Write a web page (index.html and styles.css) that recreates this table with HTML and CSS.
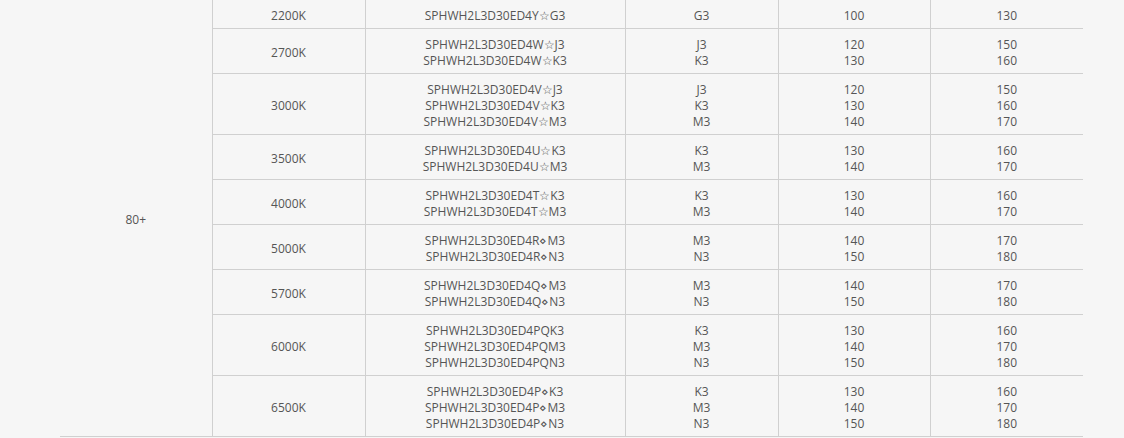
FILE: index.html
```html
<!DOCTYPE html>
<html lang="en">
<head>
    <meta charset="UTF-8">
    <title>LED Binning Table</title>
    <link rel="stylesheet" href="styles.css">
</head>
<body>
    <div class="spec-wrap">
        <table class="spec-table">
            <colgroup>
                <col class="c-cri">
                <col class="c-cct">
                <col class="c-part">
                <col class="c-bin">
                <col class="c-min">
                <col class="c-typ">
            </colgroup>
            <tbody>
                <tr>
                    <td rowspan="9" class="cri">80+</td>
                    <td>2200K</td>
                    <td>SPHWH2L3D30ED4Y☆G3</td>
                    <td>G3</td>
                    <td>100</td>
                    <td>130</td>
                </tr>
                <tr>
                    <td>2700K</td>
                    <td>SPHWH2L3D30ED4W☆J3<br>SPHWH2L3D30ED4W☆K3</td>
                    <td>J3<br>K3</td>
                    <td>120<br>130</td>
                    <td>150<br>160</td>
                </tr>
                <tr>
                    <td>3000K</td>
                    <td>SPHWH2L3D30ED4V☆J3<br>SPHWH2L3D30ED4V☆K3<br>SPHWH2L3D30ED4V☆M3</td>
                    <td>J3<br>K3<br>M3</td>
                    <td>120<br>130<br>140</td>
                    <td>150<br>160<br>170</td>
                </tr>
                <tr>
                    <td>3500K</td>
                    <td>SPHWH2L3D30ED4U☆K3<br>SPHWH2L3D30ED4U☆M3</td>
                    <td>K3<br>M3</td>
                    <td>130<br>140</td>
                    <td>160<br>170</td>
                </tr>
                <tr>
                    <td>4000K</td>
                    <td>SPHWH2L3D30ED4T☆K3<br>SPHWH2L3D30ED4T☆M3</td>
                    <td>K3<br>M3</td>
                    <td>130<br>140</td>
                    <td>160<br>170</td>
                </tr>
                <tr>
                    <td>5000K</td>
                    <td>SPHWH2L3D30ED4R⋄M3<br>SPHWH2L3D30ED4R⋄N3</td>
                    <td>M3<br>N3</td>
                    <td>140<br>150</td>
                    <td>170<br>180</td>
                </tr>
                <tr>
                    <td>5700K</td>
                    <td>SPHWH2L3D30ED4Q⋄M3<br>SPHWH2L3D30ED4Q⋄N3</td>
                    <td>M3<br>N3</td>
                    <td>140<br>150</td>
                    <td>170<br>180</td>
                </tr>
                <tr>
                    <td>6000K</td>
                    <td>SPHWH2L3D30ED4PQK3<br>SPHWH2L3D30ED4PQM3<br>SPHWH2L3D30ED4PQN3</td>
                    <td>K3<br>M3<br>N3</td>
                    <td>130<br>140<br>150</td>
                    <td>160<br>170<br>180</td>
                </tr>
                <tr>
                    <td>6500K</td>
                    <td>SPHWH2L3D30ED4P⋄K3<br>SPHWH2L3D30ED4P⋄M3<br>SPHWH2L3D30ED4P⋄N3</td>
                    <td>K3<br>M3<br>N3</td>
                    <td>130<br>140<br>150</td>
                    <td>160<br>170<br>180</td>
                </tr>
            </tbody>
        </table>
    </div>
</body>
</html>
```

FILE: styles.css
```css
body {
    margin: 0;
    background-color: #f6f6f6;
    font-family: "Open Sans", Arial, sans-serif;
    color: #555;
}
.spec-wrap {
    padding: 0 41px 0 60px;
    margin-top: -1px;
}
.spec-table {
    width: 1023px;
    border-collapse: collapse;
    table-layout: fixed;
    font-size: 12px;
    line-height: 16px;
}
.c-cri { width: 152px; }
.c-cct { width: 153px; }
.c-part { width: 260px; }
.c-bin { width: 153px; }
.c-min { width: 152px; }
.c-typ { width: 153px; }
.spec-table td {
    border: 1px solid #d0d0d0;
    padding: 8px 0 4px;
    text-align: center;
    vertical-align: middle;
}
.spec-table td:first-child {
    border-left: none;
}
.spec-table td:last-child {
    border-right: none;
}
```
